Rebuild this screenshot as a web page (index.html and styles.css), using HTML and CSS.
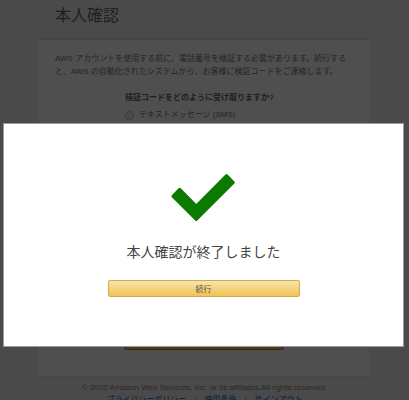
FILE: index.html
```html
<!DOCTYPE html>
<html lang="ja">
<head>
  <meta charset="UTF-8">
  <meta name="viewport" content="width=device-width, initial-scale=1.0">
  <title>本人確認</title>
  <link rel="stylesheet" href="styles.css">
</head>
<body>

  <!-- ページ本体 -->
  <h1 class="page-title">本人確認</h1>

  <div class="panel">
    <p class="panel-text">AWS アカウントを使用する前に、電話番号を検証する必要があります。続行すると、AWS の自動化されたシステムから、お客様に検証コードをご連絡します。</p>

    <div class="question">
      <div class="question-title">検証コードをどのように受け取りますか?</div>
      <label class="radio-row"><span class="radio"></span>テキストメッセージ (SMS)</label>
      <label class="radio-row"><span class="radio"></span>音声通話</label>
    </div>

    <button class="send-button">SMS を送信する</button>
  </div>

  <div class="footer">
    <div class="copyright">© 2020 Amazon Web Services, Inc. or its affiliates.All rights reserved.</div>
    <div class="footer-links">
      <a href="#">プライバシーポリシー</a><span class="sep">|</span><a href="#">使用条件</a><span class="sep">|</span><a href="#">サインアウト</a>
    </div>
  </div>

  <!-- 暗い背景 -->
  <div class="overlay"></div>

  <!-- 完了ダイアログ -->
  <div class="modal">
    <svg class="check" xmlns="http://www.w3.org/2000/svg" viewBox="168 170 72 56" width="72" height="56">
      <polygon points="172.9,196.2 179.7,189.4 196.25,205.96 226.55,175.67 233.33,182.45 196.25,219.54"
        fill="#0a7b00" stroke="#0a7b00" stroke-width="3" stroke-linejoin="round"/>
    </svg>
    <div class="modal-text">本人確認が終了しました</div>
    <button class="continue-button">続行</button>
  </div>

</body>
</html>
```

FILE: styles.css
```css
body {
  margin: 0;
  padding: 0;
  height: 400px;
  overflow: hidden;
  background-color: #efefef;
  font-family: "Liberation Sans", "Noto Sans CJK JP", sans-serif;
  color: #666;
}

/* Заголовок страницы */
.page-title {
  margin: 0;
  height: 38px;
  padding: 5px 0 0 55px;
  box-sizing: border-box;
  font-size: 16px;
  font-weight: normal;
  line-height: 22px;
  color: #666;
}

/* Белая панель */
.panel {
  width: 331px;
  height: 339px;
  margin-left: 38px;
  box-sizing: border-box;
  background-color: #fff;
  border-top: 2px solid #dcdcdc;
  border-bottom: 1px solid #e0e0e0;
  padding: 12px 17px 0;
  display: flex;
  flex-direction: column;
}

.panel-text {
  margin: 0;
  font-size: 8px;
  line-height: 13px;
  color: #777;
}

.question {
  margin: 13px 0 0 70px;
  font-size: 8px;
  line-height: 13px;
}

.question-title {
  font-weight: bold;
  color: #666;
  margin-bottom: 4px;
}

.radio-row {
  display: flex;
  align-items: center;
  gap: 5px;
  color: #777;
  line-height: 14px;
}

.radio {
  width: 7px;
  height: 7px;
  border: 1px solid #bbb;
  border-radius: 50%;
  background-color: #eee;
}

.send-button {
  margin: auto 0 26px 69px;
  width: 160px;
  height: 20px;
  border: 1px solid #a88734;
  border-radius: 2px;
  background: linear-gradient(#f7dfa5, #f0c14b);
  font-size: 8px;
}

/* Подвал */
.footer {
  text-align: center;
  font-size: 8px;
  line-height: 12px;
  padding-top: 5px;
  color: #888;
}

.footer-links a {
  color: #0066c0;
  text-decoration: none;
  font-size: 8px;
}

.footer-links .sep {
  margin: 0 8px;
  color: #999;
}

/* Затемнение */
.overlay {
  position: fixed;
  top: 0;
  left: 0;
  width: 100vw;
  height: 100vh;
  background-color: rgba(0, 0, 0, 0.69);
}

/* Модальное окно */
.modal {
  position: fixed;
  top: 123px;
  left: 3px;
  width: 401px;
  height: 224px;
  box-sizing: border-box;
  background-color: #fff;
  border: 1px solid #9a9a9a;
  display: flex;
  flex-direction: column;
  align-items: center;
  padding-top: 46px;
}

.check {
  display: block;
}

.modal-text {
  margin-top: 15px;
  font-family: "Noto Sans CJK JP", sans-serif;
  font-size: 14px;
  line-height: 20px;
  color: #444;
}

.continue-button {
  margin-top: 19px;
  width: 192px;
  height: 17px;
  padding: 0;
  border: 1px solid #d2aa4e;
  border-radius: 2px;
  background: linear-gradient(#f8e4ab, #f0c353);
  font-family: "Noto Sans CJK JP", sans-serif;
  font-size: 8px;
  color: #555;
}
```
